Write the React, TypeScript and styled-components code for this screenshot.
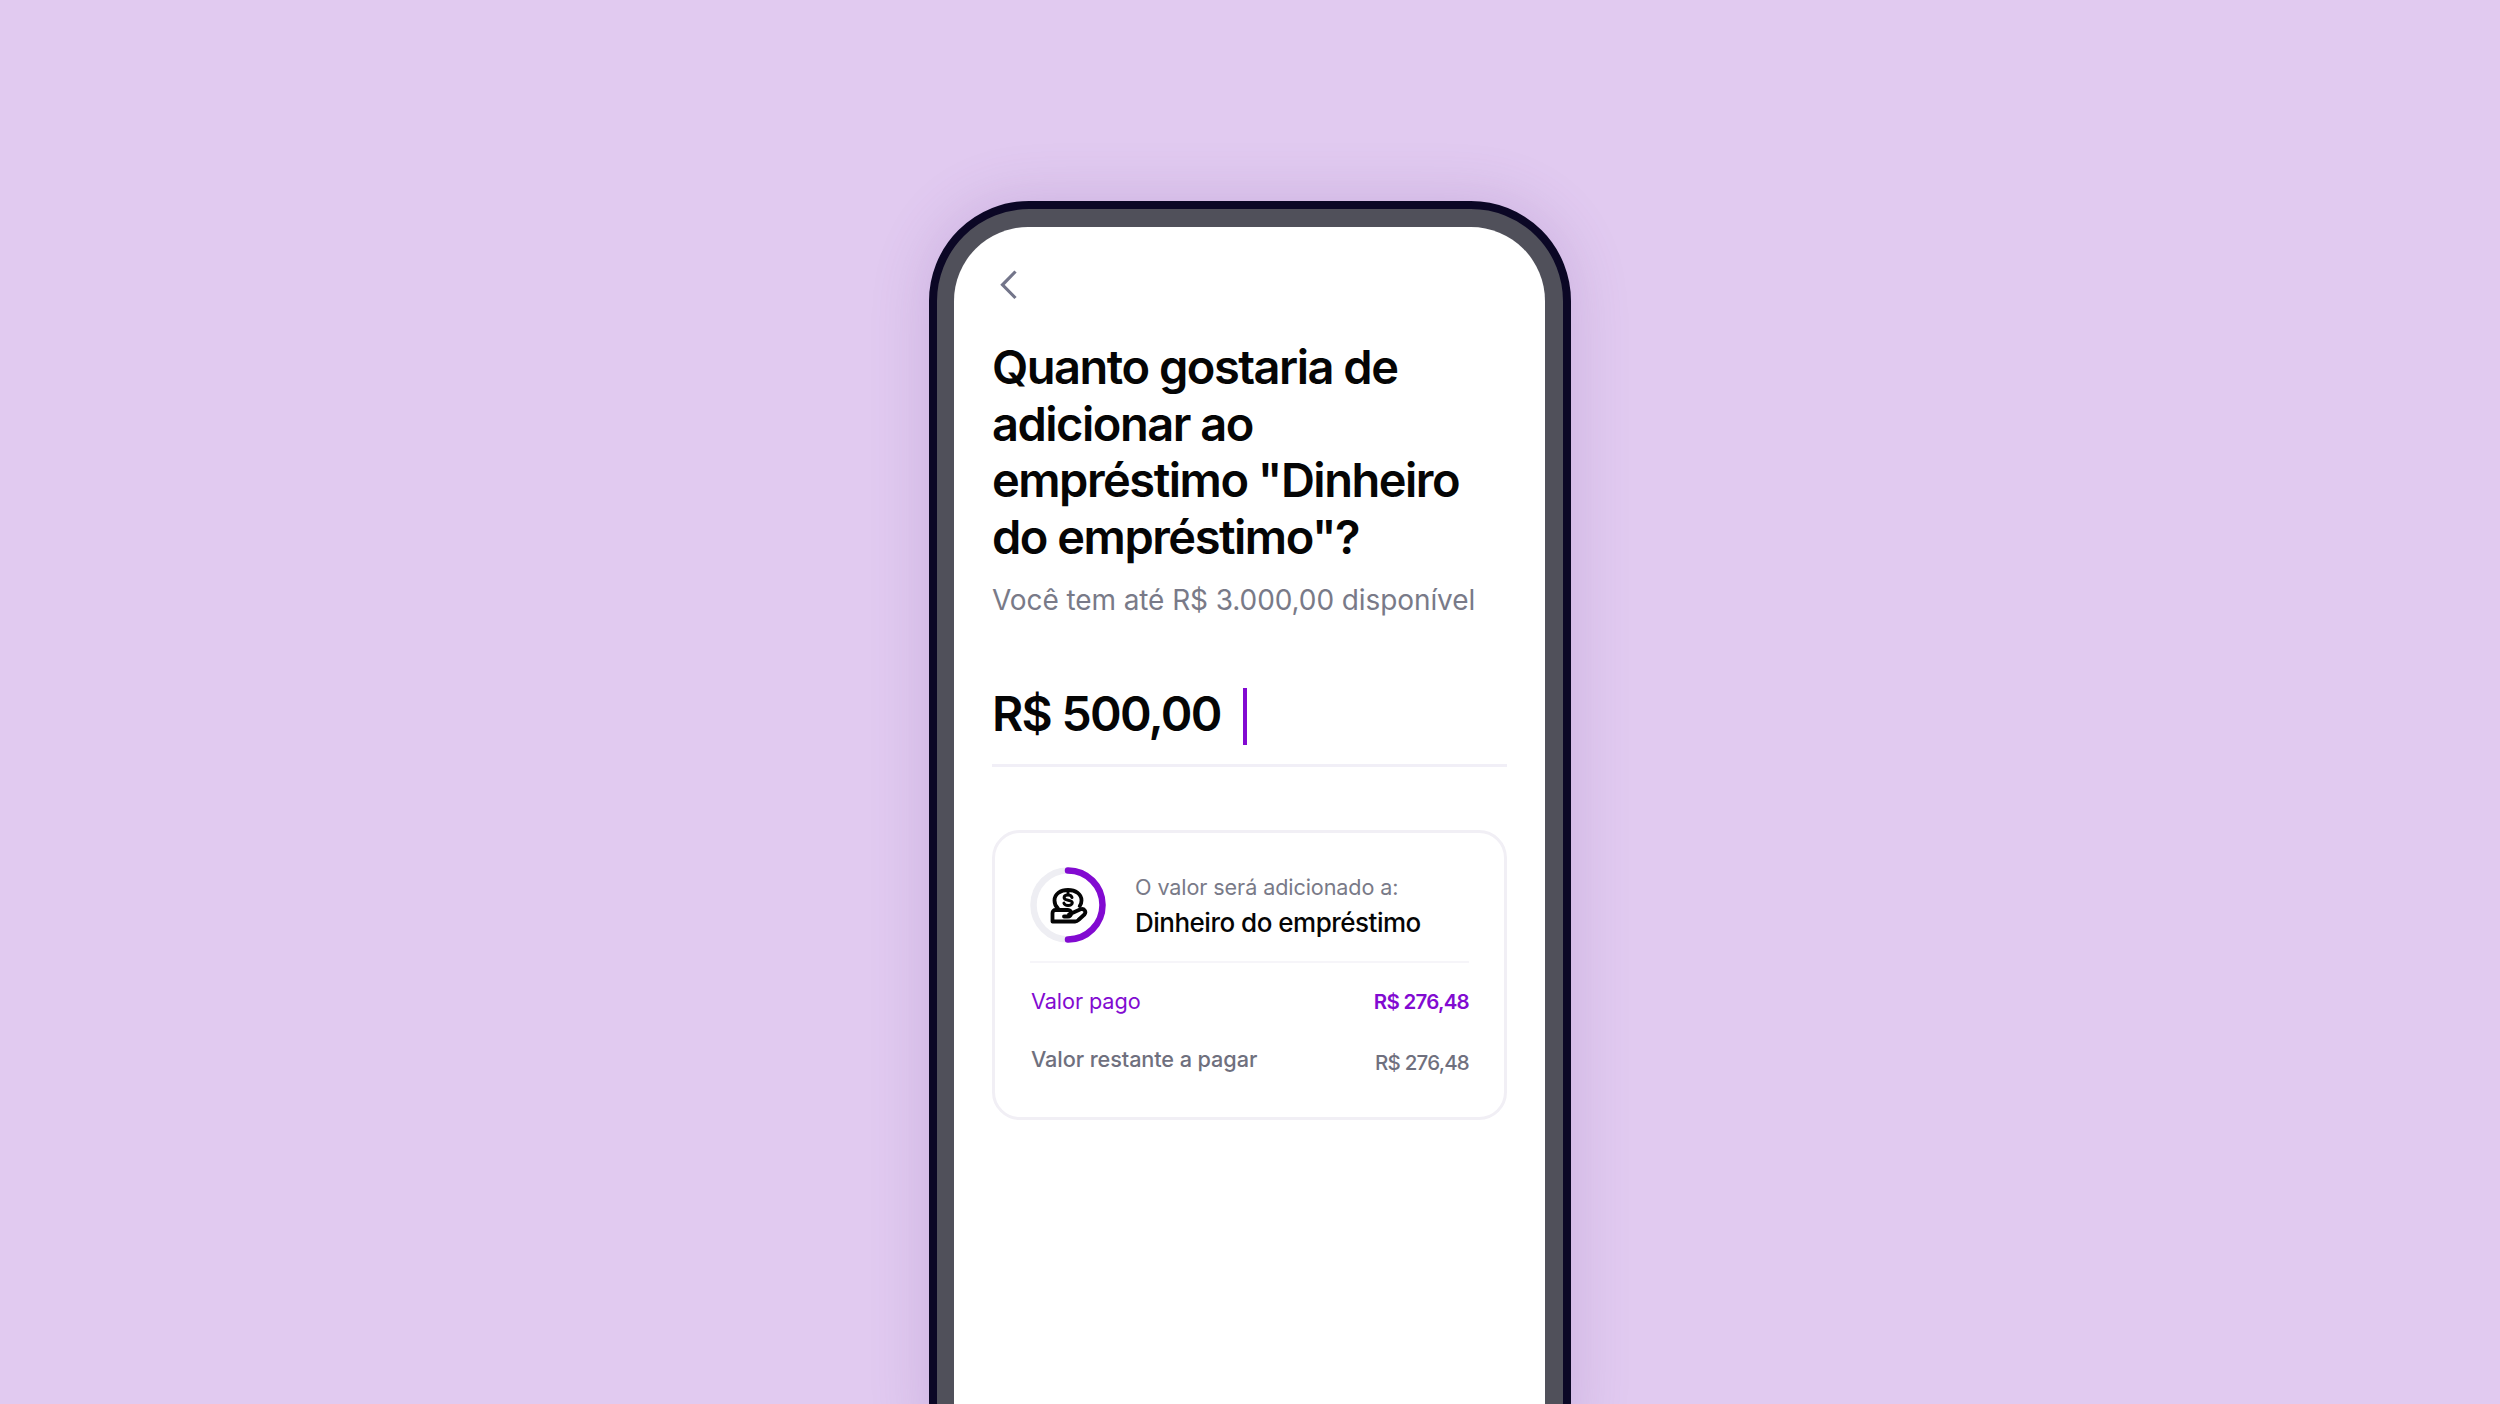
import React from "react";
import styled, { createGlobalStyle } from "styled-components";

const Global = createGlobalStyle`
  html, body { margin: 0; padding: 0; background: #e1caf0; }
  body { font-family: "Inter", "Liberation Sans", sans-serif; -webkit-font-smoothing: antialiased; }
`;

const Stage = styled.main`
  width: 2500px;
  height: 1404px;
  overflow: hidden;
  background: #e1caf0;
  display: flex;
  justify-content: center;
  padding-top: 201px;
  box-sizing: border-box;
`;

const PhoneShell = styled.div`
  width: 642px;
  height: 1300px;
  box-sizing: border-box;
  flex: none;
  border: solid #0b0725;
  border-width: 8px;
  border-radius: 100px;
  background: #50505a;
  padding: 18px 18px 0 17px;
  box-shadow: 0 0 60px rgba(110, 70, 150, 0.2);
`;

const Screen = styled.div`
  height: 100%;
  background: #fff;
  border-radius: 74px;
  padding: 41px 38px 0;
  box-sizing: border-box;
  display: flex;
  flex-direction: column;
`;

const BackButton = styled.button`
  align-self: flex-start;
  width: 34px;
  height: 34px;
  padding: 0;
  border: 0;
  background: none;
  display: block;
  margin-bottom: 37px;
`;

const Heading = styled.h1`
  margin: 0;
  font-size: 47px;
  line-height: 56.5px;
  font-weight: 600;
  letter-spacing: -1.5px;
  color: #050505;
`;

const Subtitle = styled.p`
  margin: 15px 0 0;
  font-size: 28px;
  line-height: 40px;
  font-weight: 400;
  letter-spacing: -0.09px;
  color: #797a88;
`;

const AmountField = styled.div`
  margin-top: 68px;
  height: 76px;
  display: flex;
  align-items: flex-start;
  gap: 22px;
  border-bottom: 3px solid #f1eff7;
`;

const Amount = styled.span`
  margin-top: -3px;
  font-size: 48px;
  line-height: 57px;
  font-weight: 600;
  letter-spacing: -1.7px;
  color: #050505;
`;

const Caret = styled.span`
  width: 4px;
  height: 57px;
  background: #820ad1;
`;

const Card = styled.section`
  margin-top: 63px;
  height: 290px;
  box-sizing: border-box;
  border: 3px solid #f1eff5;
  border-radius: 28px;
  padding: 34px 35px 0;
`;

const CardHead = styled.div`
  display: flex;
  align-items: center;
  gap: 29px;
  padding-bottom: 18px;
  border-bottom: 2px solid #f6f5f9;
`;

const Ring = styled.div`
  width: 76px;
  height: 76px;
  flex: none;
`;

const HeadText = styled.div`
  display: flex;
  flex-direction: column;
  gap: 5px;
`;

const HeadLabel = styled.span`
  font-size: 21.6px;
  line-height: 30px;
  letter-spacing: -0.1px;
  color: #797a88;
`;

const HeadTitle = styled.span`
  font-size: 26px;
  line-height: 32px;
  font-weight: 500;
  letter-spacing: -0.5px;
  color: #050505;
`;

const Row = styled.div<{ $tone: "accent" | "muted"; $mt: number }>`
  display: flex;
  justify-content: space-between;
  align-items: flex-start;
  margin-top: ${(p) => p.$mt}px;
  line-height: 30px;
  padding-left: 1px;
  color: ${(p) => (p.$tone === "accent" ? "#820ad1" : "#6f707e")};
`;

const RowLabel = styled.span<{ $weight: number }>`
  font-size: 21.7px;
  font-weight: ${(p) => p.$weight};
  letter-spacing: -0.1px;
`;

const RowValue = styled.span<{ $weight: number; $shift: number }>`
  font-size: 20.5px;
  font-weight: ${(p) => p.$weight};
  letter-spacing: -0.75px;
  margin-top: ${(p) => p.$shift}px;
`;

const Back = () => (
  <svg width="34" height="34" viewBox="0 0 34 34" fill="none" aria-hidden="true">
    <path d="M23.500 3.500 10.500 16.800 23.500 30" stroke="#73758a" strokeWidth="3.200" />
  </svg>
);

const LoanRing = () => (
  <svg width="76" height="76" viewBox="0 0 76 76" fill="none" aria-hidden="true">
    <circle cx="38" cy="38" r="34.500" stroke="#eeeef3" strokeWidth="6.500" />
    <path d="M38 3.500a34.500 34.500 0 0 1 0 69" stroke="#820ad1" strokeWidth="6.500" strokeLinecap="round" />
    <g stroke="#050505" strokeWidth="3.800" strokeLinejoin="round" strokeLinecap="round">
      <path d="M28 41.500c-2.500-2.200-3.500-5-3.500-8 0-6.500 6-10.500 13.500-10.500s13.500 4 13.500 10.500c0 2-.6 4-1.800 5.600" />
      <path d="M22.500 54.500V46a3 3 0 0 1 3-3H38a3 3 0 0 1 0 6.500h-4M39 47.500l11.500-5.200c3.700-1.200 6.200 2.200 3.900 5.200l-6 5.500a5 5 0 0 1-3.400 1.500H22.500" />
      <path d="M42 30.500c-.5-1.500-2-2.400-4-2.400-2.300 0-3.900 1.100-3.900 2.700 0 3.400 8.200 1.500 8.200 5 0 1.500-1.800 2.700-4.200 2.700-2.100 0-3.700-.9-4.200-2.400M38 25.500v2.200" strokeWidth="3" />
    </g>
  </svg>
);

export default function App() {
  return (
    <Stage>
      <Global />
      <PhoneShell>
        <Screen>
          <BackButton aria-label="Voltar"><Back /></BackButton>
          <Heading>
            Quanto gostaria de<br />adicionar ao<br />empréstimo "Dinheiro<br />do empréstimo"?
          </Heading>
          <Subtitle>Você tem até R$ 3.000,00 disponível</Subtitle>
          <AmountField>
            <Amount>R$ 500,00</Amount>
            <Caret />
          </AmountField>
          <Card>
            <CardHead>
              <Ring><LoanRing /></Ring>
              <HeadText>
                <HeadLabel>O valor será adicionado a:</HeadLabel>
                <HeadTitle>Dinheiro do empréstimo</HeadTitle>
              </HeadText>
            </CardHead>
            <Row $tone="accent" $mt={23}>
              <RowLabel $weight={400}>Valor pago</RowLabel>
              <RowValue $weight={600} $shift={1}>R$ 276,48</RowValue>
            </Row>
            <Row $tone="muted" $mt={27}>
              <RowLabel $weight={500}>Valor restante a pagar</RowLabel>
              <RowValue $weight={500} $shift={4}>R$ 276,48</RowValue>
            </Row>
          </Card>
        </Screen>
      </PhoneShell>
    </Stage>
  );
}
